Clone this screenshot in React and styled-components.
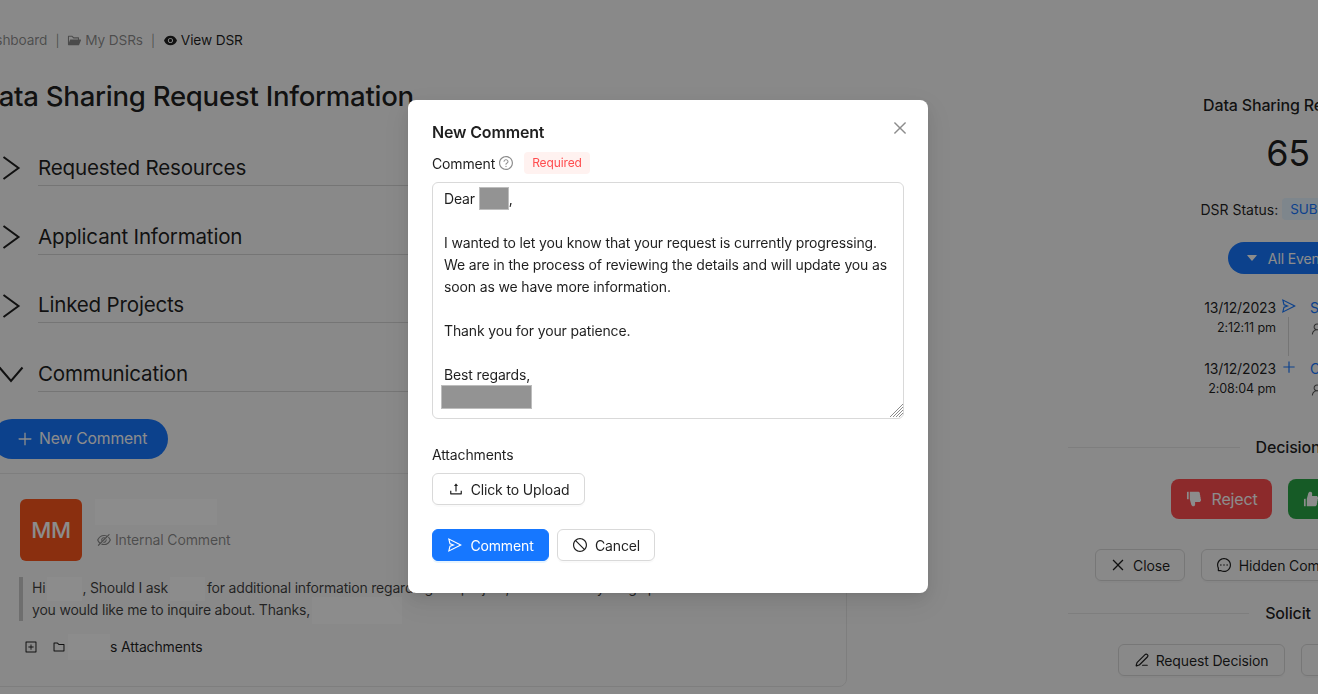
import React from "react";
import styled, { createGlobalStyle } from "styled-components";
import {
  AiFillCaretDown,
  AiFillDashboard,
  AiFillDislike,
  AiFillEye,
  AiFillFolderOpen,
  AiFillLike,
  AiOutlineClose,
  AiOutlineEyeInvisible,
  AiOutlineFolder,
  AiOutlineMessage,
  AiOutlinePlus,
  AiOutlinePlusSquare,
  AiOutlineQuestionCircle,
  AiOutlineSend,
  AiOutlineStop,
  AiOutlineUpload,
  AiOutlineUser,
} from "react-icons/ai";
import { PenLine } from "lucide-react";

const GlobalStyle = createGlobalStyle`
  html, body {
    margin: 0;
    height: 100%;
    overflow: hidden;
    background: #fafafa;
    font-family: Inter, "Liberation Sans", sans-serif;
    color: rgba(0, 0, 0, 0.88);
  }
  * { box-sizing: border-box; letter-spacing: -0.01em; }
`;

const Page = styled.div`
  display: flex;
  width: 1560px;
  height: 694px;
  margin-left: -21px;
  overflow: hidden;
`;

const LeftColumn = styled.div`
  width: 868px;
  flex: none;
  padding-top: 30px;
`;

const RightColumn = styled.div`
  width: 440px;
  flex: none;
  margin-left: 221px;
  padding-top: 94px;
  display: flex;
  flex-direction: column;
  align-items: center;
`;

const Breadcrumb = styled.div`
  display: flex;
  align-items: center;
  height: 20px;
  margin-left: -19px;
  font-size: 13.7px;
  color: rgba(0, 0, 0, 0.45);
`;

const Crumb = styled.span`
  display: inline-flex;
  align-items: center;
  gap: 3px;
  color: ${(p) => (p.$active ? "rgba(0,0,0,0.88)" : "rgba(0,0,0,0.45)")};
  svg { font-size: 15px; }
`;

const Sep = styled.span`
  margin: 0 8px;
  font-size: 12px;
`;

const Title = styled.h1`
  margin: 27px 0 0;
  font-size: 27.6px;
  line-height: 38px;
  font-weight: 500;
  white-space: nowrap;
`;

const Sections = styled.div`
  margin-top: 19px;
`;

const Section = styled.div`
  display: flex;
  align-items: center;
  height: 68.7px;
  padding-left: 24px;
  gap: 18px;
`;

const SectionLabel = styled.div`
  flex: 1;
  font-size: 20.6px;
  line-height: 32px;
  border-bottom: 1px solid rgba(0, 0, 0, 0.14);
  height: 34px;
  margin-top: 1px;
`;

const Chevron = styled.svg`
  width: 17px;
  height: 24px;
  flex: none;
  fill: none;
  overflow: visible;
  stroke: rgba(0, 0, 0, 0.88);
  stroke-width: 2;
`;

const NewComment = styled.button`
  display: flex;
  align-items: center;
  gap: 5px;
  height: 40px;
  margin: 10px 0 0 13px;
  padding: 0 21px 0 24px;
  border: none;
  border-radius: 20px;
  background: #1677ff;
  color: #fff;
  font: 400 15.7px Inter, sans-serif;
  svg { font-size: 18px; }
`;

const Card = styled.div`
  margin-top: 14px;
  height: 214px;
  padding: 25px 0 0 40px;
  border: 1px solid rgba(0, 0, 0, 0.08);
  border-radius: 8px;
`;

const CommentHead = styled.div`
  display: flex;
  gap: 13px;
`;

const Avatar = styled.div`
  width: 62px;
  height: 62px;
  border-radius: 6px;
  background: #fb561d;
  color: #fff;
  display: flex;
  align-items: center;
  justify-content: center;
  font-size: 22px;
  font-weight: 500;
`;

const Blur = styled.span`
  display: inline-block;
  width: ${(p) => p.$w}px;
  height: ${(p) => p.$h}px;
  margin: -6px ${(p) => p.$r || 0}px -6px ${(p) => p.$l || 0}px;
  background: #fff;
  vertical-align: middle;
`;

const NameBlur = styled(Blur)`
  display: block;
  margin: 0;
`;

const Internal = styled.div`
  display: flex;
  align-items: center;
  gap: 3px;
  margin: 7px 0 0 1px;
  font-size: 14px;
  line-height: 16px;
  color: rgba(0, 0, 0, 0.45);
  svg { font-size: 16px; }
`;

const Quote = styled.div`
  margin: 16px 0 0 -1px;
  padding-left: 9px;
  width: 800px;
  height: 44px;
  border-left: 4px solid rgba(0, 0, 0, 0.2);
  font-size: 14px;
  line-height: 22px;
  letter-spacing: -0.2px;
  color: rgba(0, 0, 0, 0.75);
  white-space: nowrap;
`;

const AttachRow = styled.div`
  display: flex;
  align-items: center;
  margin: 15px 0 0 4px;
  font-size: 14px;
  line-height: 22px;
`;

const RowIcon = styled.span`
  display: flex;
  margin-right: ${(p) => p.$gap}px;
  font-size: 14px;
`;

const StatusLine = styled.div`
  margin-left: 12px;
  font-size: 16px;
  line-height: 22px;
  font-weight: 500;
  white-space: nowrap;
`;

const Count = styled.div`
  margin-top: 15px;
  font-size: 36px;
  line-height: 44px;
`;

const Status = styled.div`
  display: flex;
  align-items: center;
  gap: 4px;
  margin-top: 23px;
  font-size: 14px;
  letter-spacing: 0;
  white-space: nowrap;
`;

const Tag = styled.span`
  padding: 0 8px;
  height: 22px;
  line-height: 22px;
  font-size: 13.5px;
  border-radius: 4px;
  background: #e6f4ff;
  color: #1677ff;
`;

const EventsButton = styled.button`
  display: flex;
  align-items: center;
  justify-content: center;
  gap: 9px;
  height: 32px;
  width: 120px;
  margin-top: 22px;
  border: none;
  border-radius: 16px;
  background: #1677ff;
  color: #fff;
  font: 400 14px Inter, sans-serif;
  white-space: nowrap;
`;

const Timeline = styled.div`
  margin-top: 24px;
  display: flex;
  flex-direction: column;
  gap: 21px;
  width: 440px;
`;

const Event = styled.div`
  display: grid;
  grid-template-columns: 208px 25px 1fr;
  height: 40px;
`;

const EventTime = styled.div`
  text-align: right;
  font-size: 14px;
  line-height: 20px;
  span { display: block; margin-top: 1px; font-size: 12.6px; line-height: 18px; }
`;

const EventIcon = styled.div`
  display: flex;
  flex-direction: column;
  align-items: center;
  color: #1677ff;
  font-size: 16px;
  svg { flex: none; }
`;

const Tail = styled.span`
  flex: none;
  width: 1px;
  height: 39px;
  margin-top: 3px;
  background: rgba(0, 0, 0, 0.14);
`;

const EventLink = styled.div`
  padding-left: 9px;
  font-size: 14px;
  line-height: 20px;
  color: #1677ff;
  svg { display: block; margin-top: 4px; color: rgba(0, 0, 0, 0.65); font-size: 14px; }
`;

const DividerRow = styled.div`
  display: flex;
  align-items: center;
  gap: 16px;
  width: 440px;
  margin-top: ${(p) => p.$top}px;
  font-size: 16px;
  line-height: 22px;
  font-weight: 500;
  &::before, &::after {
    content: "";
    flex: 1;
    height: 1px;
    background: rgba(0, 0, 0, 0.08);
  }
`;

const ButtonRow = styled.div`
  display: flex;
  gap: 16px;
  justify-content: center;
  margin-top: ${(p) => p.$top}px;
  margin-left: ${(p) => p.$shift || 0}px;
  padding-right: ${(p) => p.$pad || 0}px;
`;

const Big = styled.button`
  display: flex;
  align-items: center;
  justify-content: center;
  gap: 8px;
  width: ${(p) => p.$w}px;
  height: 40px;
  border: none;
  border-radius: 8px;
  background: ${(p) => p.$bg};
  color: #fff;
  font: 400 16px Inter, sans-serif;
  svg { font-size: 18px; }
`;

const Plain = styled.button`
  display: inline-flex;
  align-items: center;
  justify-content: center;
  gap: 7px;
  height: 32px;
  width: ${(p) => p.$w}px;
  padding: 0;
  background: transparent;
  border: 1px solid #d9d9d9;
  border-radius: 6px;
  color: rgba(0, 0, 0, 0.88);
  font: 400 14px Inter, sans-serif;
  white-space: nowrap;
  box-shadow: 0 2px 0 rgba(0, 0, 0, 0.02);
  svg { font-size: 16px; flex: none; }
`;

const Overlay = styled.div`
  position: fixed;
  inset: 0;
  background: rgba(0, 0, 0, 0.45);
  display: flex;
  justify-content: center;
  align-items: flex-start;
  padding: 100px 0 0 18px;
`;

const Modal = styled.div`
  position: relative;
  width: 520px;
  height: 493px;
  padding: 20px 24px;
  background: #fff;
  border-radius: 8px;
  box-shadow: 0 6px 16px rgba(0, 0, 0, 0.08), 0 3px 6px -4px rgba(0, 0, 0, 0.12),
    0 9px 28px 8px rgba(0, 0, 0, 0.05);
`;

const CloseButton = styled.button`
  position: absolute;
  top: 19px;
  right: 19px;
  width: 18px;
  height: 18px;
  padding: 0;
  border: none;
  background: none;
  color: rgba(0, 0, 0, 0.45);
  font-size: 18px;
  display: flex;
`;

const ModalTitle = styled.div`
  font-size: 16px;
  line-height: 24px;
  font-weight: 600;
`;

const LabelRow = styled.div`
  display: flex;
  align-items: center;
  height: 22px;
  margin-top: 8px;
  font-size: 14px;
`;

const Help = styled.span`
  display: flex;
  margin-left: 3px;
  color: rgba(0, 0, 0, 0.45);
  font-size: 16px;
`;

const Required = styled.span`
  margin-left: 10px;
  padding: 0 8px;
  height: 22px;
  line-height: 22px;
  border-radius: 4px;
  background: #fff2f0;
  color: #ff4d4f;
  font-size: 12px;
`;

const TextAreaWrap = styled.div`
  position: relative;
  height: 237px;
  margin-top: 8px;
`;

const TextArea = styled.div`
  height: 100%;
  padding: 5px 11px;
  border: 1px solid #d9d9d9;
  border-radius: 6px;
  font-size: 14px;
  line-height: 22px;
  overflow: hidden;
`;

const Grip = styled.svg`
  position: absolute;
  right: 1px;
  bottom: 2px;
  width: 13px;
  height: 13px;
  stroke: #8c8c8c;
  stroke-width: 1;
`;

const Line = styled.div`
  min-height: 22px;
  white-space: nowrap;
`;

const Redacted = styled.span`
  display: inline-block;
  width: ${(p) => p.$w}px;
  height: ${(p) => p.$h}px;
  margin: ${(p) => p.$m};
  background: #939393;
  border: 1px solid #bdbdbd;
  vertical-align: middle;
`;

const FieldLabel = styled.div`
  margin-top: 25px;
  font-size: 14px;
  line-height: 22px;
`;

const Actions = styled.div`
  display: flex;
  gap: 8px;
  margin-top: 24px;
`;

const Primary = styled(Plain)`
  background: #1677ff;
  border-color: #1677ff;
  color: #fff;
  box-shadow: 0 2px 0 rgba(5, 145, 255, 0.1);
`;

const UploadButton = styled(Plain)`
  display: flex;
  margin-top: 7px;
`;

const AccordionRow = ({ open, children }) => (
  <Section>
    <Chevron viewBox="0 0 17 24">
      {open ? <polyline points="-3.5,5.5 8,19 19.5,5.5" /> : <polyline points="0.5,1 15.5,12 0.5,23" />}
    </Chevron>
    <SectionLabel>{children}</SectionLabel>
  </Section>
);

const App = () => (
  <>
    <GlobalStyle />
    <Page>
      <LeftColumn>
        <Breadcrumb>
          <Crumb><AiFillDashboard /> Dashboard</Crumb>
          <Sep>|</Sep>
          <Crumb><AiFillFolderOpen /> My DSRs</Crumb>
          <Sep>|</Sep>
          <Crumb $active><AiFillEye /> View DSR</Crumb>
        </Breadcrumb>
        <Title>Data Sharing Request Information</Title>
        <Sections>
          <AccordionRow>Requested Resources</AccordionRow>
          <AccordionRow>Applicant Information</AccordionRow>
          <AccordionRow>Linked Projects</AccordionRow>
          <AccordionRow open>Communication</AccordionRow>
        </Sections>
        <NewComment><AiOutlinePlus /> New Comment</NewComment>
        <Card>
          <CommentHead>
            <Avatar>MM</Avatar>
            <div>
              <NameBlur $w={122} $h={26} />
              <Internal><AiOutlineEyeInvisible /> Internal Comment</Internal>
            </div>
          </CommentHead>
          <Quote>
            Hi<Blur $w={35} $h={24} $l={2} />, Should I ask<Blur $w={35} $h={24} $l={2} $r={2} />for additional information regarding the project, or is there anything specific that
            <br />
            you would like me to inquire about. Thanks,<Blur $w={90} $h={27} $l={2} />
          </Quote>
          <AttachRow>
            <RowIcon $gap={14}><AiOutlinePlusSquare /></RowIcon>
            <RowIcon $gap={2}><AiOutlineFolder /></RowIcon>
            <Blur $w={42} $h={26} />s Attachments
          </AttachRow>
        </Card>
      </LeftColumn>
      <RightColumn>
        <StatusLine>Data Sharing Request ID</StatusLine>
        <Count>65</Count>
        <Status>DSR Status: <Tag>SUBMITTED</Tag></Status>
        <EventsButton><AiFillCaretDown /> All Events</EventsButton>
        <Timeline>
          <Event>
            <EventTime>13/12/2023<span>2:12:11 pm</span></EventTime>
            <EventIcon><AiOutlineSend /><Tail /></EventIcon>
            <EventLink>Submitted<AiOutlineUser /></EventLink>
          </Event>
          <Event>
            <EventTime>13/12/2023<span>2:08:04 pm</span></EventTime>
            <EventIcon><AiOutlinePlus /></EventIcon>
            <EventLink>Created<AiOutlineUser /></EventLink>
          </Event>
        </Timeline>
        <DividerRow $top={37}>Decision</DividerRow>
        <ButtonRow $top={21}>
          <Big $w={101} $bg="#ff4d4f"><AiFillDislike /> Reject</Big>
          <Big $w={117} $bg="#28a745"><AiFillLike /> Approve</Big>
        </ButtonRow>
        <ButtonRow $top={30} $pad={114}>
          <Plain $w={90}><AiOutlineClose /> Close</Plain>
          <Plain $w={166}><AiOutlineMessage /> Hidden Comment</Plain>
        </ButtonRow>
        <DividerRow $top={21}>Solicit</DividerRow>
        <ButtonRow $top={20} $shift={21}>
          <Plain $w={167}><PenLine size={14} /> Request Decision</Plain>
          <Plain $w={178}><AiOutlineMessage /> Request Comment</Plain>
        </ButtonRow>
      </RightColumn>
    </Page>
    <Overlay>
      <Modal>
        <CloseButton><AiOutlineClose /></CloseButton>
        <ModalTitle>New Comment</ModalTitle>
        <LabelRow>
          Comment
          <Help><AiOutlineQuestionCircle /></Help>
          <Required>Required</Required>
        </LabelRow>
        <TextAreaWrap>
          <TextArea>
            <Line>Dear <Redacted $w={30} $h={23} $m="-4px 0 0 0" />,</Line>
            <Line />
            <Line>I wanted to let you know that your request is currently progressing.</Line>
            <Line>We are in the process of reviewing the details and will update you as</Line>
            <Line>soon as we have more information.</Line>
            <Line />
            <Line>Thank you for your patience.</Line>
            <Line />
            <Line>Best regards,</Line>
            <Line><Redacted $w={91} $h={24} $m="-2px 0 0 -3px" /></Line>
          </TextArea>
          <Grip viewBox="0 0 13 13">
            <line x1="0" y1="13" x2="13" y2="0" />
            <line x1="3" y1="13" x2="13" y2="3" />
            <line x1="6" y1="13" x2="13" y2="6" />
            <line x1="9" y1="13" x2="13" y2="9" />
          </Grip>
        </TextAreaWrap>
        <FieldLabel>Attachments</FieldLabel>
        <UploadButton $w={153}><AiOutlineUpload /> Click to Upload</UploadButton>
        <Actions>
          <Primary $w={117}><AiOutlineSend /> Comment</Primary>
          <Plain $w={98}><AiOutlineStop /> Cancel</Plain>
        </Actions>
      </Modal>
    </Overlay>
  </>
);

export default App;
